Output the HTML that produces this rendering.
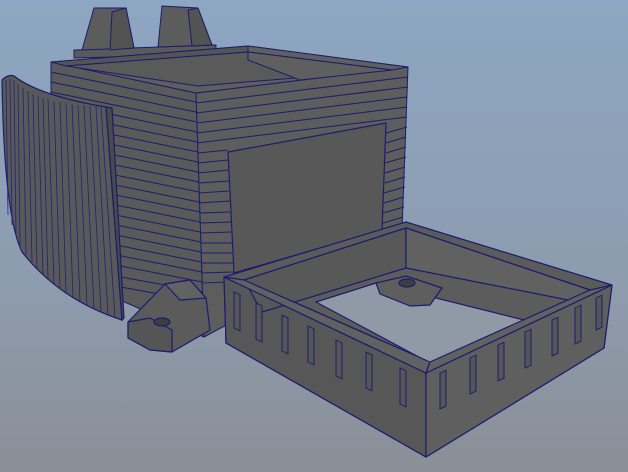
<!DOCTYPE html><html><head><style>html,body{margin:0;padding:0;width:628px;height:472px;overflow:hidden}</style></head><body>
<svg width="628" height="472" viewBox="0 0 628 472" xmlns="http://www.w3.org/2000/svg">
<defs><linearGradient id="bg" x1="0" y1="0" x2="0" y2="1"><stop offset="0" stop-color="#8da6c3"/><stop offset="0.6" stop-color="#8d9cae"/><stop offset="1" stop-color="#8a8f96"/></linearGradient></defs>
<rect width="628" height="472" fill="url(#bg)"/>
<g stroke="#1c1c6e" stroke-width="1" stroke-linejoin="round">
<polygon points="74,50 216,45 216,54 74,58" fill="#5a5a5a"/>
<polygon points="82,50 94,8 126,8 134,48" fill="#5c5c5c"/>
<polygon points="112,12 126,8 134,48 110,50" fill="#535353"/>
<polygon points="158,47 162,6 198,8 212,45" fill="#5c5c5c"/>
<polygon points="188,10 198,8 212,45 192,46" fill="#535353"/>
<polygon points="51,62 196,93 204,337 120,300 51,250" fill="#5a5a5a"/>
<polygon points="196,93 408,67 402,230 204,337" fill="#5d5d5d"/>
<polygon points="51,62 248,46 408,67 196,93" fill="#5e5e5e"/>
<polygon points="66,66 248,52 248,46 51,62" fill="#545454"/>
<polygon points="248,52 248,46 408,67 392,70" fill="#606060"/>
<polygon points="66,66 248,52 392,70 198,86" fill="#5a5a5a"/>
<polygon points="248,52 392,70 300,80 248,60" fill="#5f5f5f"/>
</g>
<g stroke="#1c1c6e" stroke-width="1">
<line x1="51" y1="72" x2="196" y2="102"/><line x1="51" y1="82" x2="196" y2="112"/><line x1="51" y1="92" x2="197" y2="122"/>
<line x1="51" y1="102" x2="197" y2="132"/><line x1="51" y1="112" x2="197" y2="142"/><line x1="51" y1="122" x2="198" y2="152"/>
<line x1="51" y1="132" x2="198" y2="162"/><line x1="51" y1="142" x2="198" y2="172"/><line x1="51" y1="152" x2="199" y2="182"/>
<line x1="51" y1="162" x2="199" y2="192"/><line x1="51" y1="172" x2="199" y2="202"/><line x1="51" y1="182" x2="200" y2="212"/>
<line x1="51" y1="192" x2="200" y2="222"/><line x1="51" y1="202" x2="200" y2="232"/><line x1="51" y1="212" x2="201" y2="242"/>
<line x1="51" y1="222" x2="201" y2="252"/><line x1="51" y1="232" x2="201" y2="262"/><line x1="51" y1="242" x2="202" y2="272"/>
<line x1="100" y1="262" x2="202" y2="282"/><line x1="110" y1="275" x2="203" y2="292"/><line x1="115" y1="286" x2="203" y2="302"/>
<line x1="196" y1="103" x2="408" y2="77"/><line x1="196" y1="113" x2="408" y2="87"/><line x1="197" y1="123" x2="407" y2="97"/>
<line x1="197" y1="133" x2="407" y2="107"/><line x1="197" y1="143" x2="407" y2="117"/>
<line x1="198" y1="153" x2="228" y2="150"/><line x1="198" y1="163" x2="228" y2="160"/><line x1="198" y1="173" x2="229" y2="170"/>
<line x1="199" y1="183" x2="229" y2="181"/><line x1="199" y1="193" x2="229" y2="191"/><line x1="199" y1="203" x2="230" y2="201"/>
<line x1="200" y1="213" x2="230" y2="212"/><line x1="200" y1="223" x2="231" y2="222"/><line x1="200" y1="233" x2="231" y2="232"/>
<line x1="201" y1="243" x2="232" y2="243"/><line x1="201" y1="253" x2="232" y2="253"/><line x1="202" y1="263" x2="233" y2="263"/>
<line x1="202" y1="273" x2="233" y2="272"/><line x1="203" y1="283" x2="225" y2="282"/>
<line x1="386" y1="133" x2="407" y2="127"/><line x1="386" y1="143" x2="406" y2="137"/><line x1="386" y1="153" x2="406" y2="147"/>
<line x1="385" y1="163" x2="406" y2="157"/><line x1="385" y1="173" x2="405" y2="167"/><line x1="385" y1="183" x2="405" y2="177"/>
<line x1="384" y1="193" x2="405" y2="187"/><line x1="384" y1="203" x2="404" y2="197"/><line x1="383" y1="213" x2="404" y2="207"/>
<line x1="383" y1="223" x2="403" y2="217"/>
</g>
<g stroke="#1c1c6e" stroke-width="1.2">
<polygon points="228,152 386,123 382,230 234,273" fill="#585858"/>
<path d="M2,80 Q8,74 14,76 Q40,96 106,107 L122,320 Q60,300 22,252 Q4,215 2,80Z" fill="#595959"/>
<path d="M106,107 L112,108 L124,318 L122,320Z" fill="#4a4a4a"/>
</g>
<g stroke="#22227a" stroke-width="0.8">
<line x1="6" y1="80" x2="8" y2="215"/><line x1="10" y1="79" x2="12" y2="225"/><line x1="14" y1="80" x2="16" y2="236"/><line x1="18" y1="84" x2="20" y2="245"/>
<line x1="23" y1="88" x2="26" y2="255"/><line x1="28" y1="91" x2="32" y2="262"/><line x1="33" y1="94" x2="37" y2="268"/><line x1="38" y1="96" x2="43" y2="274"/>
<line x1="43" y1="98" x2="48" y2="279"/><line x1="48" y1="99" x2="54" y2="284"/><line x1="54" y1="101" x2="60" y2="289"/><line x1="60" y1="102" x2="66" y2="293"/>
<line x1="66" y1="103" x2="73" y2="297"/><line x1="72" y1="104" x2="80" y2="301"/><line x1="78" y1="105" x2="87" y2="305"/><line x1="84" y1="105" x2="94" y2="309"/>
<line x1="90" y1="106" x2="101" y2="312"/><line x1="96" y1="106" x2="108" y2="315"/><line x1="101" y1="107" x2="115" y2="318"/>
</g>
<g stroke="#1c1c6e" stroke-width="1.2" stroke-linejoin="round">
<polygon points="128,322 165,284 190,280 206,298 210,330 172,352 150,350 128,338" fill="#5b5b5b"/>
<polygon points="128,322 150,318 172,330 172,352 150,350 128,338" fill="#555"/>
<polygon points="165,284 190,280 206,298 180,300" fill="#626262"/>
<ellipse cx="162" cy="322" rx="8" ry="4" fill="#3e3e3e"/>
<!-- tray -->
<polygon points="224,277 406,222 612,285 604,348 426,457 226,343" fill="#5b5b5b"/>
<polygon points="224,277 426,373 426,457 226,343" fill="#575757"/>
<polygon points="426,373 612,285 604,348 426,457" fill="#5f5f5f"/>
<polygon points="244,280 406,228 590,290 430,362" fill="#5c5c5c"/>
<polygon points="244,280 406,228 406,268 262,312" fill="#585858"/>
<polygon points="406,228 590,290 568,300 406,268" fill="#616161"/>
<polygon points="316,302 376,283 524,320 430,363" fill="#8f9aa6"/>
<polygon points="376,283 406,276 442,288 430,305 410,306 380,294" fill="#5e5e5e"/>
<ellipse cx="407" cy="283" rx="8" ry="4" fill="#3e3e3e"/>
<polygon points="224,277 244,280 430,362 426,373" fill="#616161"/>
<polygon points="426,373 430,362 590,290 612,285" fill="#616161"/>
</g>
<g fill="#555" stroke="#1c1c6e" stroke-width="1">
<rect x="234" y="292" width="6" height="36" transform="skewY(25.5)" transform-origin="234 292"/>
<rect x="256" y="303" width="6" height="36" transform="skewY(25.5)" transform-origin="256 303"/>
<rect x="282" y="315" width="6" height="36" transform="skewY(25.5)" transform-origin="282 315"/>
<rect x="308" y="326" width="6" height="36" transform="skewY(25.5)" transform-origin="308 326"/>
<rect x="336" y="340" width="6" height="36" transform="skewY(25.5)" transform-origin="336 340"/>
<rect x="366" y="352" width="6" height="36" transform="skewY(25.5)" transform-origin="366 352"/>
<rect x="400" y="368" width="6" height="36" transform="skewY(25.5)" transform-origin="400 368"/>
<rect x="440" y="373" width="6" height="36" transform="skewY(-25)" transform-origin="440 373"/>
<rect x="470" y="358" width="6" height="36" transform="skewY(-25)" transform-origin="470 358"/>
<rect x="498" y="345" width="6" height="36" transform="skewY(-25)" transform-origin="498 345"/>
<rect x="525" y="332" width="6" height="36" transform="skewY(-25)" transform-origin="525 332"/>
<rect x="552" y="320" width="6" height="36" transform="skewY(-25)" transform-origin="552 320"/>
<rect x="575" y="308" width="6" height="36" transform="skewY(-25)" transform-origin="575 308"/>
<rect x="596" y="298" width="6" height="32" transform="skewY(-25)" transform-origin="596 298"/>
</g>
</svg>
</body></html>
